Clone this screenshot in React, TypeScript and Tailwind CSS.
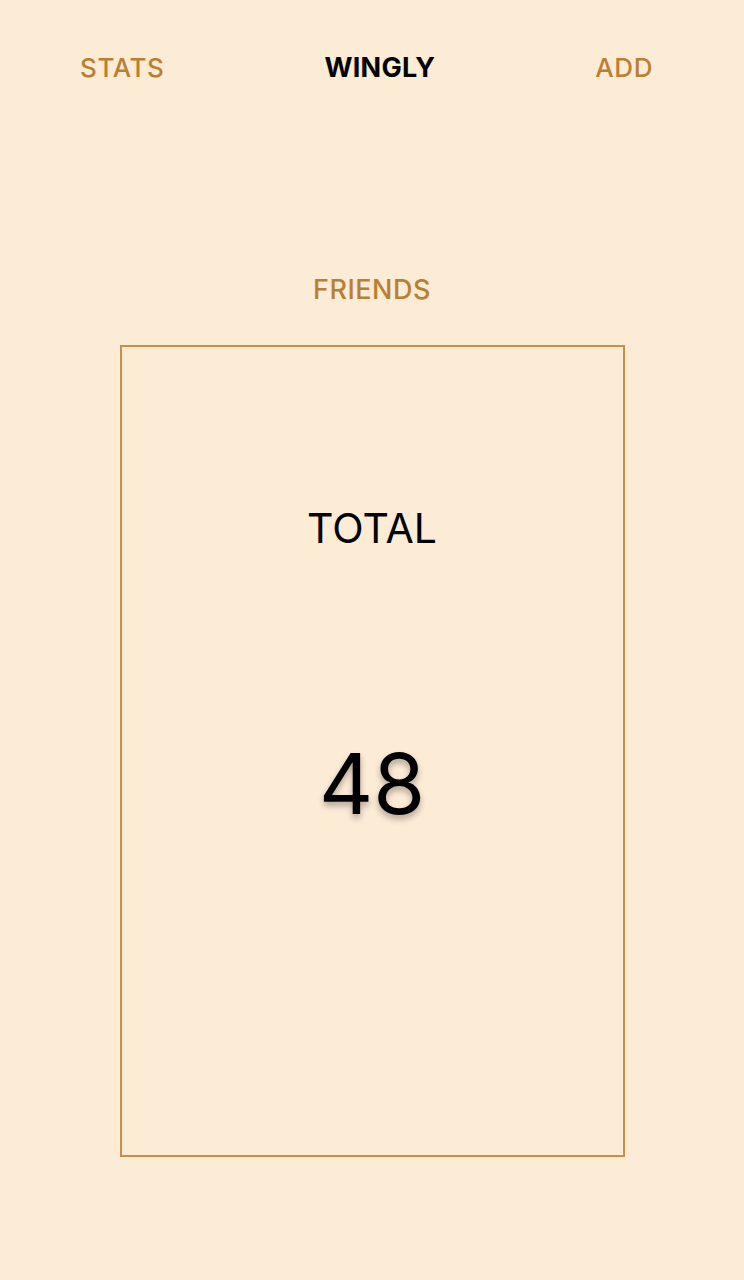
export default function App() {
  return (
    <div
      className="flex min-h-[1280px] w-full flex-col items-center bg-[#fcebd5]"
      style={{ fontFamily: "Inter, 'Noto Sans', sans-serif" }}
    >
      <header className="flex w-full items-center justify-between pl-[80px] pr-[91px] pt-[50px]">
        <span className="text-[26px] font-medium leading-[36px] tracking-[0.6px] text-[#b98034]">STATS</span>
        <span className="text-[27px] font-bold leading-[36px] tracking-[0.3px] text-black">WINGLY</span>
        <span className="text-[26px] font-medium leading-[36px] tracking-[0.6px] text-[#b98034]">ADD</span>
      </header>

      <h2 className="mt-[186px] text-[27px] font-medium leading-[36px] tracking-[0.5px] text-[#b98034]">FRIENDS</h2>

      <section className="mt-[37px] flex h-[812px] w-[505px] flex-col items-center border-2 border-[#c4914c]">
        <p className="mt-[153px] text-[41px] leading-[56px] text-black">TOTAL</p>
        <p className="mt-[178px] text-[84px] leading-[100px] text-black [text-shadow:0_4px_6px_rgba(0,0,0,0.3)]">
          48
        </p>
      </section>
    </div>
  );
}
